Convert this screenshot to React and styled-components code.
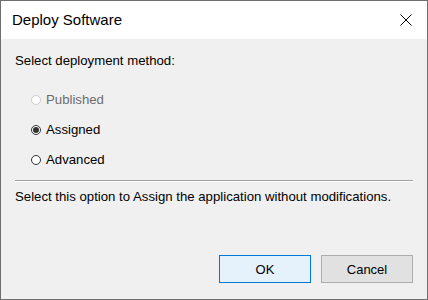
import React, { useState } from 'react'
import styled, { createGlobalStyle } from 'styled-components'

const GlobalStyle = createGlobalStyle`
  html, body {
    margin: 0;
    padding: 0;
    background: #ffffff;
  }
  * {
    box-sizing: border-box;
  }
`

const Window = styled.div`
  width: 428px;
  height: 300px;
  border: 1px solid #6f6f6f;
  display: flex;
  flex-direction: column;
  font-family: "Liberation Sans", Arial, sans-serif;
  font-size: 13.2px;
  color: #000;
`

const TitleBar = styled.div`
  height: 38px;
  background: #ffffff;
  display: flex;
  align-items: center;
  justify-content: space-between;
  padding-left: 11px;
`

const Title = styled.div`
  font-size: 15px;
  line-height: 20px;
`

const CloseButton = styled.div`
  width: 46px;
  height: 38px;
  display: flex;
  align-items: center;
  justify-content: center;
  margin-right: -2px;
`

const Body = styled.div`
  flex: 1;
  background: #f0f0f0;
  display: flex;
  flex-direction: column;
  padding: 14px 14px 16px 14px;
`

const Heading = styled.div`
  line-height: 16px;
`

const RadioGroup = styled.div`
  display: flex;
  flex-direction: column;
  gap: 14px;
  margin-top: 22px;
  padding-left: 16px;
`

const RadioRow = styled.label`
  display: flex;
  align-items: center;
  gap: 5px;
  height: 16px;
  color: ${p => (p.$disabled ? '#6d6d6d' : '#000')};
`

const Circle = styled.span`
  width: 10px;
  height: 10px;
  border-radius: 50%;
  border: 1px solid ${p => (p.$disabled ? '#cccccc' : '#333333')};
  background: #ffffff;
  display: flex;
  align-items: center;
  justify-content: center;
  margin-top: 2px;
`

const Dot = styled.span`
  width: 6px;
  height: 6px;
  border-radius: 50%;
  background: #333333;
`

const Separator = styled.div`
  margin-top: 13px;
  border-top: 1px solid #a0a0a0;
  border-bottom: 1px solid #ffffff;
`

const Description = styled.div`
  margin-top: 7px;
  line-height: 16px;
`

const ButtonRow = styled.div`
  margin-top: auto;
  display: flex;
  justify-content: flex-end;
  gap: 10px;
`

const Button = styled.div`
  width: 92px;
  height: 28px;
  display: flex;
  align-items: center;
  justify-content: center;
  font-size: 13px;
  border: 1px solid ${p => (p.$primary ? '#0078d7' : '#adadad')};
  background: ${p => (p.$primary ? '#e5f1fb' : '#e1e1e1')};
`

const options = [
  { id: 'published', label: 'Published', disabled: true },
  { id: 'assigned', label: 'Assigned' },
  { id: 'advanced', label: 'Advanced' },
]

export default function App() {
  const [method, setMethod] = useState('assigned')
  return (
    <>
      <GlobalStyle />
      <Window>
        <TitleBar>
          <Title>Deploy Software</Title>
          <CloseButton>
            <svg width="12" height="12" viewBox="0 0 12 12">
              <path d="M0.5 0.5 L11.5 11.5 M11.5 0.5 L0.5 11.5" stroke="#000" strokeWidth="1" fill="none" />
            </svg>
          </CloseButton>
        </TitleBar>
        <Body>
          <Heading>Select deployment method:</Heading>
          <RadioGroup>
            {options.map(o => (
              <RadioRow key={o.id} $disabled={o.disabled} onClick={() => !o.disabled && setMethod(o.id)}>
                <Circle $disabled={o.disabled}>{method === o.id && <Dot />}</Circle>
                {o.label}
              </RadioRow>
            ))}
          </RadioGroup>
          <Separator />
          <Description>Select this option to Assign the application without modifications.</Description>
          <ButtonRow>
            <Button $primary>OK</Button>
            <Button>Cancel</Button>
          </ButtonRow>
        </Body>
      </Window>
    </>
  )
}
